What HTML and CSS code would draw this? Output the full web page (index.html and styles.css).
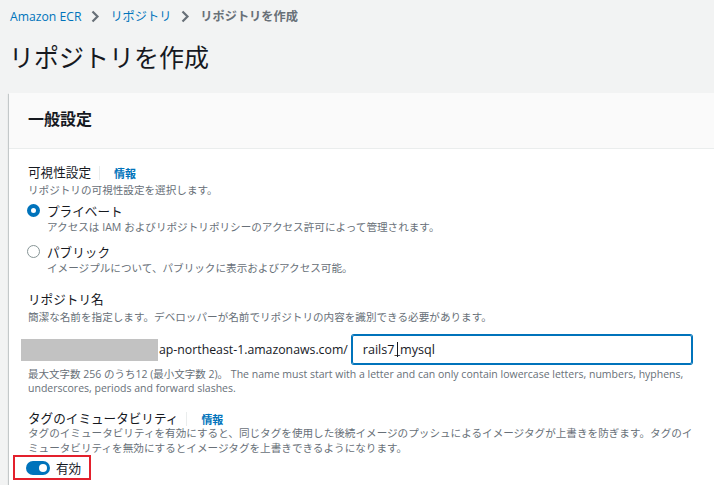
FILE: index.html
```html
<!DOCTYPE html>
<html lang="ja">
<head>
<meta charset="utf-8">
<title>リポジトリを作成</title>
<link rel="stylesheet" href="styles.css">
</head>
<body>
<div class="page">
  <nav class="crumbs">
    <a class="crumb-link" href="#">Amazon ECR</a>
    <svg class="chev" width="10" height="13" viewBox="0 0 10 13"><path d="M2.5 1.5 L7.5 6.5 L2.5 11.5" fill="none" stroke="#687078" stroke-width="2.2"/></svg>
    <a class="crumb-link" href="#">リポジトリ</a>
    <svg class="chev" width="10" height="13" viewBox="0 0 10 13"><path d="M2.5 1.5 L7.5 6.5 L2.5 11.5" fill="none" stroke="#687078" stroke-width="2.2"/></svg>
    <span class="crumb-current">リポジトリを作成</span>
  </nav>
  <h1 class="title">リポジトリを作成</h1>
  <section class="panel">
    <div class="panel-head"><h2 class="panel-title">一般設定</h2></div>
    <div class="panel-body">
      <div class="field">
        <div class="label-row"><span class="label">可視性設定</span><span class="sep"></span><a class="info" href="#">情報</a></div>
        <div class="desc">リポジトリの可視性設定を選択します。</div>
        <div class="radios">
          <div class="radio-opt">
            <div class="radio-row"><span class="radio checked"></span><span class="radio-label">プライベート</span></div>
            <div class="radio-desc">アクセスは IAM およびリポジトリポリシーのアクセス許可によって管理されます。</div>
          </div>
          <div class="radio-opt">
            <div class="radio-row"><span class="radio"></span><span class="radio-label">パブリック</span></div>
            <div class="radio-desc">イメージプルについて、パブリックに表示およびアクセス可能。</div>
          </div>
        </div>
      </div>
      <div class="field">
        <div class="label-row"><span class="label">リポジトリ名</span></div>
        <div class="desc">簡潔な名前を指定します。デベロッパーが名前でリポジトリの内容を識別できる必要があります。</div>
        <div class="name-row">
          <span class="masked"></span>
          <span class="prefix">ap-northeast-1.amazonaws.com/</span>
          <div class="input">rails7_<span class="caret"></span>mysql</div>
        </div>
        <div class="constraint">最大文字数 256 のうち12 (最小文字数 2)。 The name must start with a letter and can only contain lowercase letters, numbers, hyphens,<br>underscores, periods and forward slashes.</div>
      </div>
      <div class="field">
        <div class="label-row"><span class="label">タグのイミュータビリティ</span><span class="sep"></span><a class="info" href="#">情報</a></div>
        <div class="desc two">タグのイミュータビリティを有効にすると、同じタグを使用した後続イメージのプッシュによるイメージタグが上書きを防ぎます。タグのイ<br>ミュータビリティを無効にするとイメージタグを上書きできるようになります。</div>
        <div class="toggle-row">
          <span class="toggle"><span class="knob"></span></span>
          <span class="toggle-label">有効</span>
        </div>
      </div>
    </div>
  </section>
</div>
</body>
</html>
```

FILE: styles.css
```css
html, body {
  margin: 0;
  padding: 0;
  background: #f2f3f3;
  overflow: hidden;
}
body {
  font-family: "Open Sans", "Noto Sans CJK JP", sans-serif;
  color: #16191f;
  width: 714px;
  height: 485px;
}
.page {
  padding: 6px 0 0 9px;
}
.crumbs {
  display: flex;
  align-items: center;
  height: 20px;
  padding-left: 1px;
  font-size: 12.2px;
}
.crumb-link {
  color: #0073bb;
  text-decoration: none;
}
.chev {
  margin: 0 10px 0 9px;
}
.crumb-current {
  color: #687078;
  font-weight: 700;
}
.title {
  margin: 15px 0 20px 0;
  font-size: 25px;
  line-height: 32px;
  font-weight: 400;
  color: #16191f;
}
.panel {
  background: #fff;
  box-shadow: 0 1px 1px 0 rgba(0, 28, 36, 0.3), -1px 1px 1px 0 rgba(0, 28, 36, 0.15);
  height: 392px;
}
.panel-head {
  background: #fafafa;
  border-bottom: 1px solid #eaeded;
  padding: 15px 19px 18px 19px;
}
.panel-title {
  margin: 0;
  font-size: 16px;
  line-height: 22px;
  font-weight: 700;
}
.panel-body {
  padding: 15px 0 0 19px;
}
.field + .field {
  margin-top: 15px;
}
.label-row {
  display: flex;
  align-items: center;
  height: 18px;
}
.label {
  font-size: 12.6px;
  line-height: 18px;
  color: #16191f;
}
.sep {
  width: 1px;
  height: 14px;
  background: #eaeded;
  margin: 0 14px 0 8px;
}
.info {
  font-size: 11px;
  font-weight: 700;
  color: #0073bb;
  text-decoration: none;
}
.desc {
  font-size: 10.6px;
  line-height: 16px;
  color: #687078;
  white-space: nowrap;
}
.desc.two {
  line-height: 15px;
  margin-top: -2px;
}
.radios {
  margin-top: 3px;
  display: flex;
  flex-direction: column;
  gap: 7px;
}
.radio-row {
  display: flex;
  align-items: center;
  height: 18px;
}
.radio {
  box-sizing: border-box;
  width: 13px;
  height: 13px;
  border-radius: 50%;
  border: 1.5px solid #879596;
  margin-left: -1px;
  margin-right: 7px;
  background: #fff;
}
.radio.checked {
  border: 4px solid #0073bb;
}
.radio-label {
  font-size: 12.6px;
  color: #16191f;
}
.radio-desc {
  padding-left: 19px;
  font-size: 10.6px;
  line-height: 16px;
  color: #687078;
}
.name-row {
  display: flex;
  align-items: center;
  margin-top: 10px;
  margin-left: -7px;
}
.masked {
  width: 137px;
  height: 22px;
  background: #c2c2c2;
}
.prefix {
  font-size: 12.3px;
  color: #16191f;
  margin-left: 1px;
}
.input {
  box-sizing: border-box;
  margin-left: 4px;
  width: 340px;
  height: 29px;
  border: 1px solid #0073bb;
  box-shadow: 0 0 0 1px #0073bb;
  border-radius: 2px;
  padding: 0 0 0 10px;
  display: flex;
  align-items: center;
  font-size: 12.6px;
  color: #16191f;
}
.caret {
  display: inline-block;
  width: 1px;
  height: 15px;
  background: #16191f;
  margin-left: -3px;
  margin-right: 2px;
}
.constraint {
  margin-top: 3px;
  font-size: 10.5px;
  line-height: 14px;
  color: #687078;
  white-space: nowrap;
}
.toggle-row {
  display: inline-flex;
  align-items: center;
  margin-top: -1px;
  margin-left: -15px;
  border: 2px solid #e3202c;
  padding: 0 8px 0 11px;
  height: 21px;
}
.toggle {
  position: relative;
  width: 24px;
  height: 14px;
  border-radius: 7px;
  background: #0073bb;
  margin-right: 6px;
}
.knob {
  position: absolute;
  right: 3px;
  top: 3px;
  width: 8px;
  height: 8px;
  border-radius: 50%;
  background: #fff;
}
.toggle-label {
  font-size: 12.6px;
  color: #16191f;
}
```
